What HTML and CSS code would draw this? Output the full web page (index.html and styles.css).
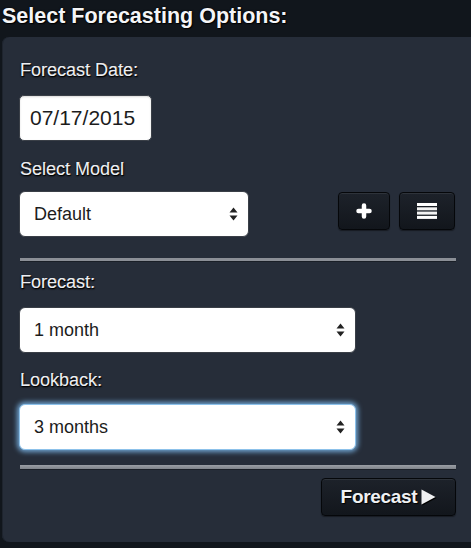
FILE: index.html
```html
<!DOCTYPE html>
<html>
<head>
<meta charset="utf-8">
<link rel="stylesheet" href="styles.css">
</head>
<body>
<h1 class="title">Select Forecasting Options:</h1>
<div class="panel">
  <div class="label label-first">Forecast Date:</div>
  <input class="date-input" type="text" value="07/17/2015">
  <div class="label label-model">Select Model</div>
  <div class="model-row">
    <div class="select-wrap select-short">
      <select class="select"><option>Default</option></select>
      <svg class="arrows" width="9" height="14" viewBox="0 0 9 14"><path d="M4.5 0.5 L8.5 5.5 L0.5 5.5 Z M4.5 13.5 L8.5 8.5 L0.5 8.5 Z" fill="#222"/></svg>
    </div>
    <div class="btn-group">
      <button class="btn btn-plus" type="button">
        <svg width="16" height="16" viewBox="0 0 16 16"><path d="M8 2.5 V13.5 M2.5 8 H13.5" stroke="#fff" stroke-width="4.5" stroke-linecap="round"/></svg>
      </button>
      <button class="btn btn-list" type="button">
        <svg width="20" height="16" viewBox="0 0 20 16"><rect x="0" y="0" width="20" height="3" fill="#fff"/><rect x="0" y="4.3" width="20" height="3" fill="#f2f2f2"/><rect x="0" y="8.6" width="20" height="3" fill="#f2f2f2"/><rect x="0" y="12.9" width="20" height="3" fill="#fff"/></svg>
      </button>
    </div>
  </div>
  <hr class="divider divider-first">
  <div class="label label-forecast">Forecast:</div>
  <div class="select-wrap select-long">
    <select class="select"><option>1 month</option></select>
    <svg class="arrows" width="9" height="14" viewBox="0 0 9 14"><path d="M4.5 0.5 L8.5 5.5 L0.5 5.5 Z M4.5 13.5 L8.5 8.5 L0.5 8.5 Z" fill="#222"/></svg>
  </div>
  <div class="label label-lookback">Lookback:</div>
  <div class="select-wrap select-long focused">
    <select class="select"><option>3 months</option></select>
    <svg class="arrows" width="9" height="14" viewBox="0 0 9 14"><path d="M4.5 0.5 L8.5 5.5 L0.5 5.5 Z M4.5 13.5 L8.5 8.5 L0.5 8.5 Z" fill="#222"/></svg>
  </div>
  <hr class="divider divider-second">
  <div class="actions">
    <button class="btn btn-forecast" type="button"><span>Forecast</span><svg class="tri" width="15" height="16" viewBox="0 0 15 16"><path d="M0.5 0.5 L14.5 8 L0.5 15.5 Z" fill="#f0f1f3"/></svg></button>
  </div>
</div>
</body>
</html>
```
FILE: styles.css
```css
html, body {
  margin: 0;
  padding: 0;
}
body {
  background: #11161c;
  font-family: "Liberation Sans", Arial, Helvetica, sans-serif;
  width: 471px;
  height: 548px;
  overflow: hidden;
}
.title {
  margin: 0;
  padding: 4px 2px 9px;
  font-size: 21.5px;
  line-height: 24px;
  font-weight: bold;
  color: #f4f5f7;
  text-shadow: 1px 1px 1px #000, 0 0 2px #000;
}
.panel {
  margin-left: 2px;
  margin-right: -8px;
  background: #262d39;
  border-radius: 7px 0 0 7px;
  padding: 23px 23px 26px 17px;
  box-shadow: inset 1px 0 0 #1e242e;
}
.label {
  font-size: 18px;
  line-height: 20px;
  color: #eceef2;
  text-shadow: 1px 1px 1px #000, 0 1px 2px #000, 0.4px 0 0 #eceef2;
  margin-left: 1px;
}
.label-model { margin-top: 18px; }
.label-forecast { margin-top: 11px; }
.label-lookback { margin-top: 17px; }
.date-input {
  display: block;
  box-sizing: border-box;
  margin-top: 15px;
  width: 133px;
  height: 46px;
  padding: 0 0 0 10px;
  font-family: "Liberation Sans", Arial, sans-serif;
  font-size: 21px;
  color: #1c1c1c;
  background: #fff;
  border: 1px solid #3a3f47;
  border-radius: 5px;
  box-shadow: inset 0 1px 2px rgba(0,0,0,0.15);
  outline: none;
}
.model-row {
  display: flex;
  justify-content: space-between;
  align-items: flex-start;
  margin-top: 12px;
}
.select-wrap {
  position: relative;
  box-sizing: border-box;
  height: 46px;
}
.select-short { width: 230px; }
.select-long { width: 337px; margin-top: 15px; }
.select-long.focused { margin-top: 14px; }
.select {
  -webkit-appearance: none;
  appearance: none;
  display: block;
  box-sizing: border-box;
  width: 100%;
  height: 100%;
  padding: 0 0 0 14px;
  font-family: "Liberation Sans", Arial, sans-serif;
  font-size: 18px;
  color: #1c1c1c;
  background: #fff;
  border: 1px solid #3a3f47;
  border-radius: 6px;
  outline: none;
}
.focused .select {
  border-color: #8cc1ea;
  box-shadow: 0 0 5px 2px rgba(125, 185, 235, 0.85);
}
.arrows {
  position: absolute;
  right: 11px;
  top: 16px;
  pointer-events: none;
}
.btn-group {
  display: flex;
  gap: 9px;
  margin-top: 1px;
  margin-right: 1px;
}
.btn {
  display: flex;
  align-items: center;
  justify-content: center;
  box-sizing: border-box;
  height: 38px;
  padding: 0;
  background: linear-gradient(#1d222a, #12161c);
  border: 1px solid #05070a;
  border-radius: 4px;
  box-shadow: inset 0 1px 0 rgba(255,255,255,0.08), 0 1px 1px rgba(0,0,0,0.4);
  color: #fff;
  cursor: pointer;
}
.btn-plus { width: 52px; }
.btn-list { width: 56px; }
.divider {
  border: none;
  height: 3px;
  background: #8b8f96;
  margin: 21px 0 0 1px;
  box-shadow: 0 1px 0 #1a1f27;
}
.divider-second {
  margin-top: 15px;
  height: 4px;
  background: linear-gradient(#9a9ea4, #7f838a);
}
.actions {
  display: flex;
  justify-content: flex-end;
  margin-top: 9px;
}
.btn-forecast {
  width: 135px;
  font-family: "Liberation Sans", Arial, sans-serif;
  font-size: 19px;
  font-weight: bold;
  color: #f0f1f3;
  text-shadow: 1px 1px 1px #000;
  letter-spacing: -0.3px;
  gap: 4px;
}
.tri {
  filter: drop-shadow(1px 1px 0 #000);
}
```
